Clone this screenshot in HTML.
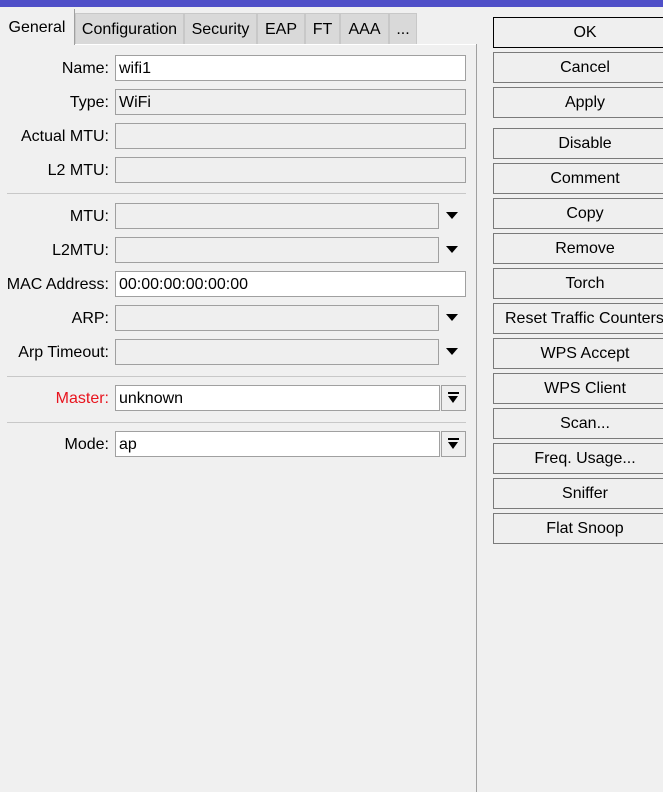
<!DOCTYPE html>
<html><head><style>
body{margin:0;width:663px;height:792px;background:#f0f0f0;position:relative;overflow:hidden;font-family:"Liberation Sans",sans-serif;font-size:16px;color:#000}
.a{position:absolute;box-sizing:border-box}
.tab{position:absolute;top:13px;height:31px;background:#d9d9d9;border:1px solid #c8c8c8;border-bottom:none;box-sizing:border-box;text-align:center;line-height:31px}
.lbl{position:absolute;right:554px;height:26px;line-height:27px;text-align:right;white-space:nowrap}
.f{position:absolute;left:115px;height:26px;border:1px solid #a0a0a0;box-sizing:border-box;padding-left:3px;line-height:26px;background:#efefef}
.w{background:#fff}
.sep{position:absolute;left:7px;width:459px;height:1px;background:#c8c8c8}
.arr{position:absolute;left:446px;width:0;height:0;border-left:6px solid transparent;border-right:6px solid transparent;border-top:7px solid #000}
.db{position:absolute;left:441px;width:25px;height:26px;border:1px solid #a0a0a0;box-sizing:border-box;background:#efefef}
.db i{position:absolute;left:6px;top:6px;width:11px;height:2px;background:#000}
.db b{position:absolute;left:6px;top:10px;border-left:5.5px solid transparent;border-right:5.5px solid transparent;border-top:7px solid #000}
.btn{position:absolute;left:493px;width:184px;height:31px;border:1px solid #7a7a7a;box-sizing:border-box;background:#efefef;text-align:center;line-height:30px;white-space:nowrap}
</style></head><body>
<div class="a" style="left:0;top:0;width:663px;height:7px;background:#4f4fc8"></div>
<div class="a" style="left:0;top:9px;width:75px;height:36px;border-right:1px solid #a0a0a0;text-align:center;line-height:38px;">General</div>
<div class="tab" style="left:75px;width:109px">Configuration</div>
<div class="tab" style="left:184px;width:73px">Security</div>
<div class="tab" style="left:257px;width:48px">EAP</div>
<div class="tab" style="left:305px;width:35px">FT</div>
<div class="tab" style="left:340px;width:49px">AAA</div>
<div class="tab" style="left:389px;width:28px">...</div>
<div class="a" style="left:75px;top:44px;width:402px;height:1px;background:#fff"></div>
<div class="a" style="left:476px;top:44px;width:1px;height:748px;background:#a0a0a0"></div>

<div class="lbl" style="top:55px">Name:</div><div class="f w" style="top:55px;width:351px">wifi1</div>
<div class="lbl" style="top:89px">Type:</div><div class="f" style="top:89px;width:351px">WiFi</div>
<div class="lbl" style="top:123px">Actual MTU:</div><div class="f" style="top:123px;width:351px"></div>
<div class="lbl" style="top:157px">L2 MTU:</div><div class="f" style="top:157px;width:351px"></div>
<div class="sep" style="top:193px"></div>
<div class="lbl" style="top:203px">MTU:</div><div class="f" style="top:203px;width:324px"></div><div class="arr" style="top:212px"></div>
<div class="lbl" style="top:237px">L2MTU:</div><div class="f" style="top:237px;width:324px"></div><div class="arr" style="top:246px"></div>
<div class="lbl" style="top:271px">MAC Address:</div><div class="f w" style="top:271px;width:351px">00:00:00:00:00:00</div>
<div class="lbl" style="top:305px">ARP:</div><div class="f" style="top:305px;width:324px"></div><div class="arr" style="top:314px"></div>
<div class="lbl" style="top:339px">Arp Timeout:</div><div class="f" style="top:339px;width:324px"></div><div class="arr" style="top:348px"></div>
<div class="sep" style="top:376px"></div>
<div class="lbl" style="top:385px;color:#e8141e">Master:</div><div class="f w" style="top:385px;width:325px">unknown</div><div class="db" style="top:385px"><i></i><b></b></div>
<div class="sep" style="top:422px"></div>
<div class="lbl" style="top:431px">Mode:</div><div class="f w" style="top:431px;width:325px">ap</div><div class="db" style="top:431px"><i></i><b></b></div>

<div class="btn" style="top:17px;border-color:#000">OK</div>
<div class="btn" style="top:52px">Cancel</div>
<div class="btn" style="top:87px">Apply</div>
<div class="btn" style="top:128px">Disable</div>
<div class="btn" style="top:163px">Comment</div>
<div class="btn" style="top:198px">Copy</div>
<div class="btn" style="top:233px">Remove</div>
<div class="btn" style="top:268px">Torch</div>
<div class="btn" style="top:303px;text-align:left;padding-left:11px">Reset Traffic Counters</div>
<div class="btn" style="top:338px">WPS Accept</div>
<div class="btn" style="top:373px">WPS Client</div>
<div class="btn" style="top:408px">Scan...</div>
<div class="btn" style="top:443px">Freq. Usage...</div>
<div class="btn" style="top:478px">Sniffer</div>
<div class="btn" style="top:513px">Flat Snoop</div>
</body></html>
